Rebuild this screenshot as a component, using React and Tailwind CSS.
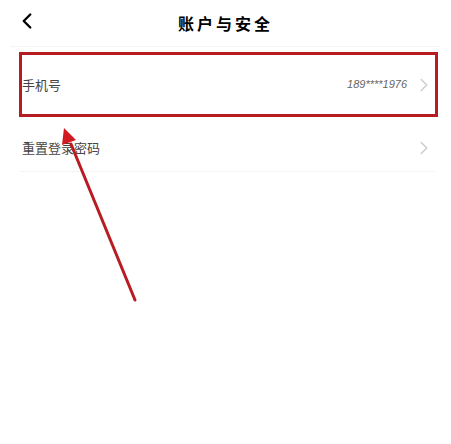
import { ChevronLeft, ChevronRight } from 'lucide-react';

const cjk = { fontFamily: '"Noto Sans CJK SC", "Noto Sans", sans-serif' };

function Row({ label, value, className }) {
  return (
    <div className={`ml-[20px] mr-[16px] flex items-center border-b border-gray-100 pl-[2px] ${className}`}>
      <span className="flex-1 text-[13px] text-[#444]" style={cjk}>{label}</span>
      {value && (
        <span className="mr-[6px] text-[11px] italic text-[#666]" style={{ fontFamily: '"Liberation Sans Narrow", "Liberation Sans", sans-serif' }}>
          {value}
        </span>
      )}
      <ChevronRight size={22} strokeWidth={1.6} className="text-[#ccc]" />
    </div>
  );
}

export default function App() {
  return (
    <div className="relative h-[444px] w-[451px] bg-white">
      <div className="relative mx-[10px] flex h-[47px] items-center justify-center border-b border-gray-100">
        <ChevronLeft size={26} strokeWidth={2.2} className="absolute left-[4px] top-[8px] text-black" />
        <span className="text-[16px] font-bold tracking-[3px] text-black" style={cjk}>账户与安全</span>
      </div>
      <div className="pt-[7px]">
        <Row label="手机号" value="189****1976" className="h-[62px]" />
        <Row label="重置登录密码" className="h-[56px] pt-[8px]" />
      </div>

      {/* annotation box around the phone row */}
      <div className="absolute left-[19px] top-[52px] h-[65px] w-[419px] border-[3px] border-[#b81c22]" />

      {/* annotation arrow */}
      <svg className="absolute left-0 top-0" width="451" height="444">
        <line x1="135" y1="300" x2="71" y2="144" stroke="#b81c22" strokeWidth="3" strokeLinecap="round" />
        <polygon points="64,128 62,145 76,140" fill="#d11a22" />
      </svg>
    </div>
  );
}
